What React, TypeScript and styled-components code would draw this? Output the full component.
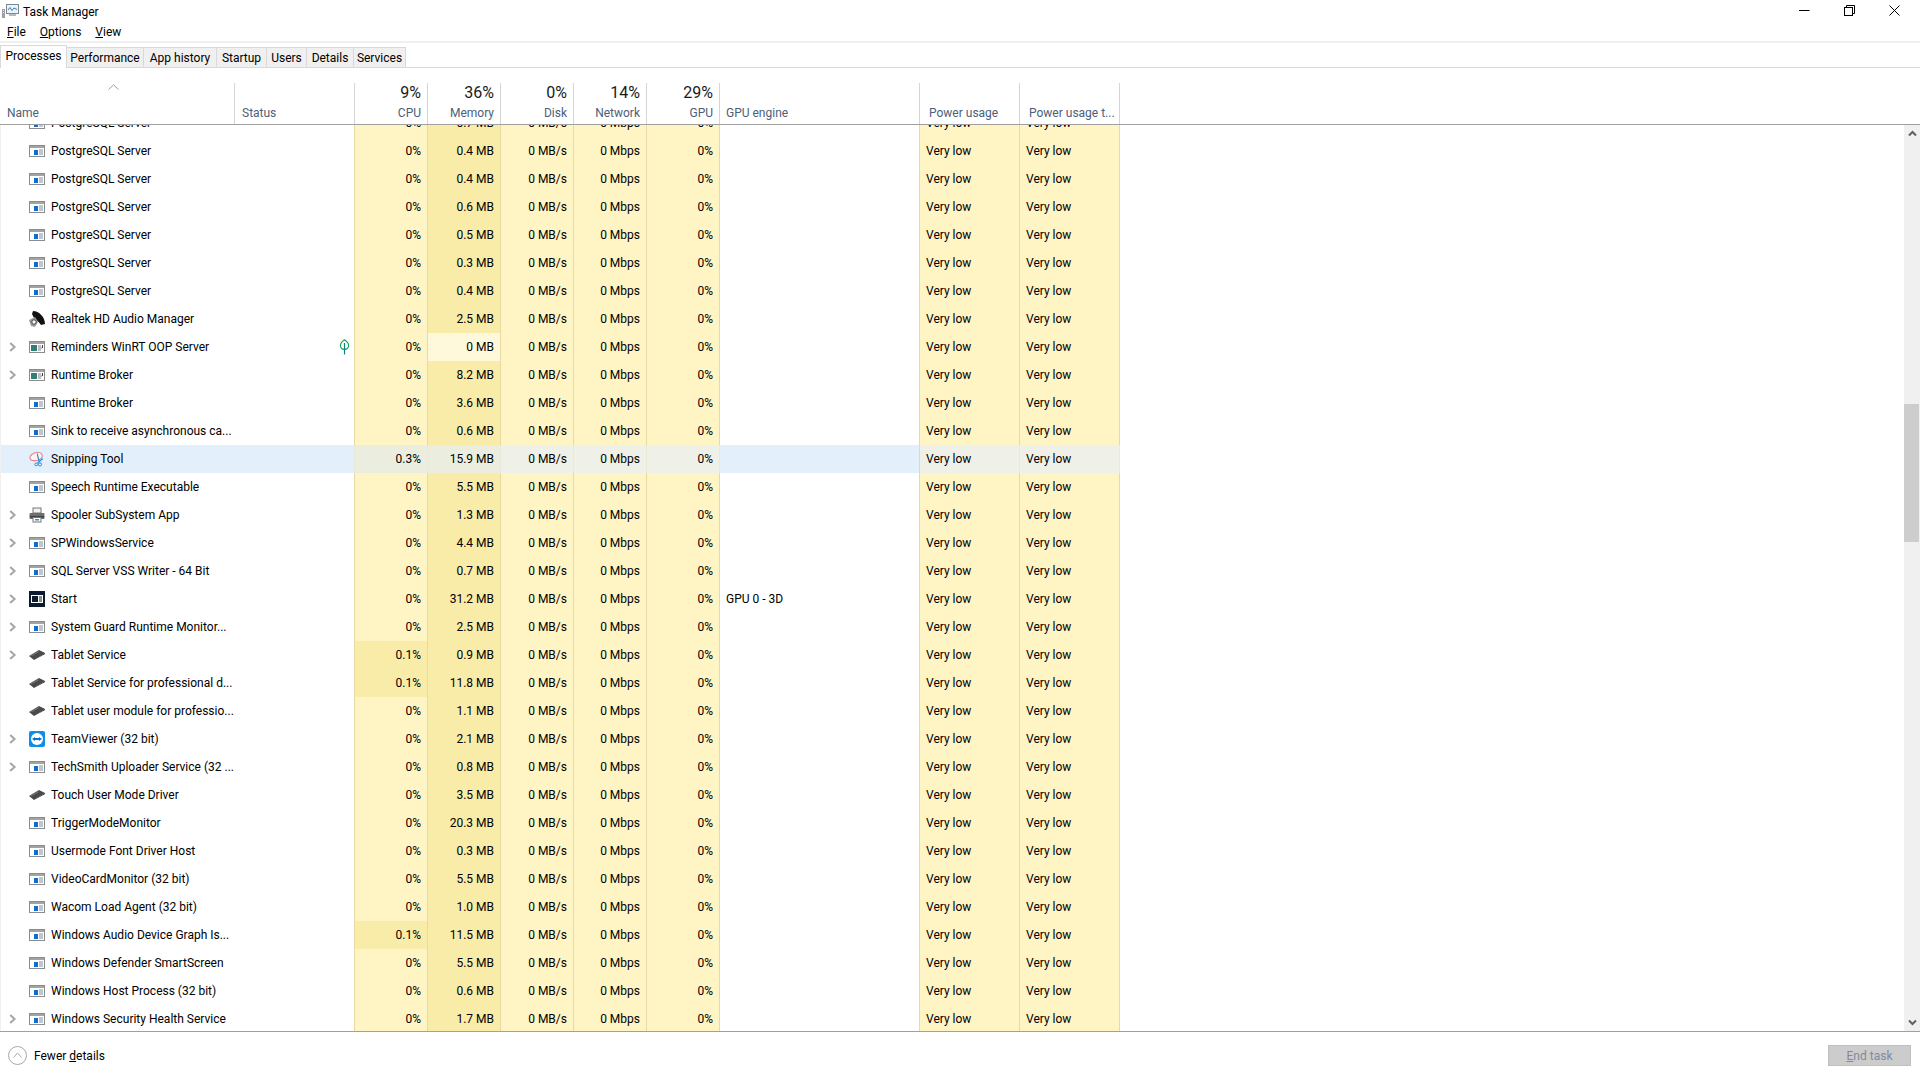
import styled, { createGlobalStyle } from "styled-components";

const COLUMNS = "235px 120px 73px 73px 73px 73px 73px 200px 100px 100px";

const COLOR = {
    CELL: "#fff4c4",
    CELL_HEAT: "#f9eca8",
    CELL_COOL: "#fff9dc",
    CELL_BORDER: "#ead9a4",
    SELECTED: "#e3f0fb",
    SELECTED_CELL: "#eff1e8",
    SELECTED_HEAT: "#ebeedf",
    SELECTED_BORDER: "#ece8d8",
    HEADER_TEXT: "#4c607a",
    DIVIDER: "#d5d5d5",
};

type IconKind = "window" | "app" | "speaker" | "snip" | "printer" | "start" | "tablet" | "teamviewer";

interface ProcessRow {
    name: string;
    memory: string;
    icon?: IconKind;
    cpu?: string;
    expandable?: boolean;
    leaf?: boolean;
    selected?: boolean;
    engine?: string;
    cool?: boolean;
}

const ROWS: ProcessRow[] = [
    { name: "PostgreSQL Server", memory: "0.7 MB" },
    { name: "PostgreSQL Server", memory: "0.4 MB" },
    { name: "PostgreSQL Server", memory: "0.4 MB" },
    { name: "PostgreSQL Server", memory: "0.6 MB" },
    { name: "PostgreSQL Server", memory: "0.5 MB" },
    { name: "PostgreSQL Server", memory: "0.3 MB" },
    { name: "PostgreSQL Server", memory: "0.4 MB" },
    { name: "Realtek HD Audio Manager", memory: "2.5 MB", icon: "speaker" },
    { name: "Reminders WinRT OOP Server", memory: "0 MB", icon: "app", expandable: true, leaf: true, cool: true },
    { name: "Runtime Broker", memory: "8.2 MB", icon: "app", expandable: true },
    { name: "Runtime Broker", memory: "3.6 MB" },
    { name: "Sink to receive asynchronous ca...", memory: "0.6 MB" },
    { name: "Snipping Tool", memory: "15.9 MB", icon: "snip", cpu: "0.3%", selected: true },
    { name: "Speech Runtime Executable", memory: "5.5 MB" },
    { name: "Spooler SubSystem App", memory: "1.3 MB", icon: "printer", expandable: true },
    { name: "SPWindowsService", memory: "4.4 MB", expandable: true },
    { name: "SQL Server VSS Writer - 64 Bit", memory: "0.7 MB", expandable: true },
    { name: "Start", memory: "31.2 MB", icon: "start", expandable: true, engine: "GPU 0 - 3D" },
    { name: "System Guard Runtime Monitor...", memory: "2.5 MB", expandable: true },
    { name: "Tablet Service", memory: "0.9 MB", icon: "tablet", cpu: "0.1%", expandable: true },
    { name: "Tablet Service for professional d...", memory: "11.8 MB", icon: "tablet", cpu: "0.1%" },
    { name: "Tablet user module for professio...", memory: "1.1 MB", icon: "tablet" },
    { name: "TeamViewer (32 bit)", memory: "2.1 MB", icon: "teamviewer", expandable: true },
    { name: "TechSmith Uploader Service (32 ...", memory: "0.8 MB", expandable: true },
    { name: "Touch User Mode Driver", memory: "3.5 MB", icon: "tablet" },
    { name: "TriggerModeMonitor", memory: "20.3 MB" },
    { name: "Usermode Font Driver Host", memory: "0.3 MB" },
    { name: "VideoCardMonitor (32 bit)", memory: "5.5 MB" },
    { name: "Wacom Load Agent (32 bit)", memory: "1.0 MB" },
    { name: "Windows Audio Device Graph Is...", memory: "11.5 MB", cpu: "0.1%" },
    { name: "Windows Defender SmartScreen", memory: "5.5 MB" },
    { name: "Windows Host Process (32 bit)", memory: "0.6 MB" },
    { name: "Windows Security Health Service", memory: "1.7 MB", expandable: true },
];

const GlobalStyle = createGlobalStyle`
    html, body {
        margin: 0;
        height: 100%;
        background: #fff;
    }
    body {
        font-family: Roboto, "Noto Sans", sans-serif;
        font-size: 12px;
        color: #000;
    }
`;

const Page = styled.div`
    display: flex;
    flex-direction: column;
    height: 100vh;
    overflow: hidden;
`;

const TitleBar = styled.div`
    display: flex;
    align-items: center;
    height: 22px;
    padding: 0 3px 0 2px;
    box-sizing: border-box;
`;

const TitleText = styled.span`
    margin-left: 4px;
    padding-top: 2px;
    flex: 1;
`;

const WindowButton = styled.div`
    display: flex;
    align-items: center;
    justify-content: center;
    align-self: flex-start;
    width: 45px;
    height: 20px;
`;

const MenuBar = styled.div`
    display: flex;
    align-items: center;
    gap: 14px;
    height: 19px;
    padding: 1px 0 0 7px;
    box-sizing: border-box;
    height: 21px;
    border-bottom: 2px solid #f0f0f0;
`;

const TabStrip = styled.div`
    display: flex;
    align-items: flex-end;
    height: 25px;
    border-bottom: 1px solid #d9d9d9;
    box-sizing: border-box;
`;

const Tab = styled.div<{ $active?: boolean; $width: number }>`
    display: flex;
    align-items: center;
    justify-content: center;
    box-sizing: border-box;
    width: ${({ $width }) => $width}px;
    height: ${({ $active }) => ($active ? "23px" : "21px")};
    margin-bottom: -1px;
    background: ${({ $active }) => ($active ? "#fff" : "#f0f0f0")};
    border: 1px solid #d9d9d9;
    border-left-width: ${({ $active }) => ($active ? "1px" : "0")};
    border-bottom-width: ${({ $active }) => ($active ? "0" : "1px")};
    padding-bottom: ${({ $active }) => ($active ? "2px" : "0")};
`;

const HeaderRow = styled.div`
    position: relative;
    display: grid;
    grid-template-columns: ${COLUMNS};
    height: 57px;
    align-items: end;
    border-bottom: 1px solid #a0a0a0;
    box-sizing: border-box;
    padding-right: 16px;
`;

const HeaderCell = styled.div<{ $align?: "left" | "right"; $inset?: number }>`
    display: flex;
    flex-direction: column;
    justify-content: flex-end;
    box-sizing: border-box;
    height: 41px;
    padding: 0 6px 2px ${({ $inset }) => $inset ?? 6}px;
    text-align: ${({ $align }) => $align ?? "left"};
    white-space: nowrap;
    border-right: 1px solid ${COLOR.DIVIDER};
`;

const SortCaret = styled.svg`
    position: absolute;
    left: 108px;
    top: 16px;
`;

const Percent = styled.div`
    margin-bottom: 1px;
    font-size: 16px;
    line-height: 20px;
    color: #1a1a1a;
`;

const ColumnLabel = styled.div`
    line-height: 18px;
    color: ${COLOR.HEADER_TEXT};
`;

const Body = styled.div`
    flex: 1;
    display: flex;
    min-height: 0;
    border-bottom: 1px solid #a0a0a0;
`;

const RowList = styled.div`
    flex: 1;
    min-width: 0;
    overflow: hidden;
    border-left: 1px solid #f0f0f0;
`;

const RowScroller = styled.div`
    margin-top: -16px;
    margin-left: -1px;
`;

const Row = styled.div<{ $selected?: boolean }>`
    display: grid;
    grid-template-columns: ${COLUMNS};
    width: 1120px;
    height: 28px;
    line-height: 28px;
    background: ${({ $selected }) => ($selected ? COLOR.SELECTED : "transparent")};
    white-space: nowrap;
`;

const NameCell = styled.div`
    display: flex;
    align-items: center;
    padding-left: 9px;
`;

const ChevronSlot = styled.div`
    display: flex;
    align-items: center;
    width: 20px;
    flex-shrink: 0;
`;

const IconSlot = styled.div`
    display: flex;
    align-items: center;
    width: 22px;
    flex-shrink: 0;
`;

const StatusCell = styled.div<{ $selected?: boolean }>`
    display: flex;
    align-items: center;
    justify-content: flex-end;
    padding-right: 4px;
    border-right: 1px solid ${({ $selected }) => ($selected ? COLOR.SELECTED_BORDER : COLOR.CELL_BORDER)};
`;

const ValueCell = styled.div<{ $selected?: boolean; $heat?: boolean; $cool?: boolean; $left?: boolean }>`
    box-sizing: border-box;
    padding: 0 6px;
    text-align: ${({ $left }) => ($left ? "left" : "right")};
    background: ${({ $selected, $heat, $cool }) => {
        if ($selected) {
            return $heat ? COLOR.SELECTED_HEAT : COLOR.SELECTED_CELL;
        }
        if ($cool) {
            return COLOR.CELL_COOL;
        }
        return $heat ? COLOR.CELL_HEAT : COLOR.CELL;
    }};
    border-right: 1px solid ${({ $selected }) => ($selected ? COLOR.SELECTED_BORDER : COLOR.CELL_BORDER)};
`;

const EngineCell = styled.div`
    padding-left: 6px;
    border-right: 1px solid ${COLOR.CELL_BORDER};
`;

const Scrollbar = styled.div`
    display: flex;
    flex-direction: column;
    width: 16px;
    flex-shrink: 0;
    background: #f0f0f0;
`;

const ScrollArrow = styled.div`
    display: flex;
    align-items: center;
    justify-content: center;
    height: 17px;
    flex-shrink: 0;
`;

const ScrollThumb = styled.div`
    width: 15px;
    height: 138px;
    margin-top: 262px;
    margin-bottom: auto;
    background: #cdcdcd;
`;

const Footer = styled.div`
    display: flex;
    align-items: center;
    height: 46px;
    flex-shrink: 0;
    padding: 0 9px 0 8px;
    box-sizing: border-box;
`;

const FewerDetails = styled.span`
    margin-left: 7px;
    padding-top: 1px;
    flex: 1;
`;

const EndTaskButton = styled.div`
    display: flex;
    align-items: center;
    justify-content: center;
    width: 83px;
    height: 21px;
    padding-top: 1px;
    box-sizing: border-box;
    background: #cccccc;
    border: 1px solid #bfbfbf;
    color: #7f8aa0;
`;

const Chevron = () => (
    <svg width="8" height="12" viewBox="0 0 8 12">
        <path d="M1.2 2 L5.6 6 L1.2 10" fill="none" stroke="#a6a6a6" strokeWidth="2" />
    </svg>
);

const LeafIcon = () => (
    <svg width="11" height="16" viewBox="0 0 11 16">
        <path d="M5.5 .8 C8.6 3 10 5 9.6 7.2 C9.2 9.2 7.5 10.4 5.5 10.4 C3.5 10.4 1.8 9.2 1.4 7.2 C1 5 2.4 3 5.5 .8 Z" fill="none" stroke="#17a34f" strokeWidth="1.1" />
        <path d="M5.5 4 V15.5" stroke="#0d7f8c" strokeWidth="1.2" />
    </svg>
);

const ProcessIcon = ({ kind }: { kind: IconKind }) => {
    switch (kind) {
        case "app":
            return (
                <svg width="16" height="12" viewBox="0 0 16 12">
                    <rect x=".5" y=".5" width="15" height="11" fill="#fff" stroke="#8c8c8c" />
                    <rect x="1" y="1" width="14" height="2" fill="#a3a3a3" />
                    <rect x="2" y="4" width="6" height="6" fill="#2f7f78" />
                    <path d="M9 5h3M9 7h4M9 9h3" stroke="#7a7a7a" />
                    <path d="M13.5 4v3" stroke="#444" />
                </svg>
            );
        case "speaker":
            return (
                <svg width="16" height="16" viewBox="0 0 16 16">
                    <path d="M4 0 C10 0 16 6 16 13 L12 14 C10 11 8 9 5 7 L3 3 Z" fill="#111" />
                    <path d="M0 9 L6 6 L9 11 L6 16 L2 15 Z" fill="#9a9a9a" />
                    <circle cx="5" cy="11" r="2.2" fill="#fff" stroke="#444" />
                </svg>
            );
        case "snip":
            return (
                <svg width="16" height="16" viewBox="0 0 16 16">
                    <path d="M1 7.5 C.4 5 4 1.5 8 1.2 C12 1 14 3.5 13 6 C12 8.5 8 10 4.5 9.6 C2.5 9.4 1.3 8.6 1 7.5 Z" fill="#fff5f5" stroke="#e8848e" strokeWidth="1.1" />
                    <path d="M8.2 2.5 L10.2 11 M13.8 7.5 L8.6 12" stroke="#2d8fd6" strokeWidth="1.2" />
                    <circle cx="11" cy="13.4" r="1.6" fill="none" stroke="#2d8fd6" />
                    <circle cx="7.2" cy="13.4" r="1.4" fill="none" stroke="#2d8fd6" />
                </svg>
            );
        case "printer":
            return (
                <svg width="16" height="16" viewBox="0 0 16 16">
                    <rect x="4" y="1" width="8" height="5" fill="#f2f2f2" stroke="#777" />
                    <rect x=".5" y="6" width="15" height="6" rx="1" fill="#6e6e6e" />
                    <rect x="1" y="9" width="14" height="1.5" fill="#404040" />
                    <rect x="4" y="10.5" width="8" height="4.5" fill="#fff" stroke="#777" />
                    <rect x="6" y="12" width="4" height="1.5" fill="#3a8fc8" />
                </svg>
            );
        case "start":
            return (
                <svg width="16" height="16" viewBox="0 0 16 16">
                    <rect width="16" height="16" fill="#0b1a2c" />
                    <rect x="2" y="4" width="12" height="8" fill="#fff" />
                    <rect x="3" y="5" width="6" height="6" fill="#0b1a2c" />
                    <path d="M10 6h3M10 8h3M10 10h3" stroke="#0b1a2c" />
                </svg>
            );
        case "tablet":
            return (
                <svg width="16" height="10" viewBox="0 0 16 10">
                    <path d="M0 6 L10 0 L16 3 L5 10 Z" fill="#4a4a4a" />
                    <path d="M0 6 L5 10 L16 3 L16 4 L5 10 Z" fill="#1d1d1d" />
                    <path d="M2 6 L10 1.5" stroke="#777" />
                </svg>
            );
        case "teamviewer":
            return (
                <svg width="16" height="16" viewBox="0 0 16 16">
                    <rect width="16" height="16" rx="2" fill="#0e8ee9" />
                    <circle cx="8" cy="8" r="6" fill="#fff" />
                    <path d="M3 8 L6 6 V7 H10 V6 L13 8 L10 10 V9 H6 V10 Z" fill="#0e6fc9" />
                </svg>
            );
        default:
            return (
                <svg width="16" height="12" viewBox="0 0 16 12">
                    <rect x=".5" y=".5" width="15" height="11" fill="#fff" stroke="#8c8c8c" />
                    <rect x="1" y="1" width="14" height="2" fill="#a3a3a3" />
                    <rect x="5" y="5" width="4" height="5" fill="#0f6cd0" />
                    <path d="M10 5h4M10 7h4M10 9h4" stroke="#7a8fa8" />
                </svg>
            );
    }
};

const TaskManagerIcon = () => (
    <svg width="17" height="14" viewBox="0 0 17 14">
        <rect x="4.5" y=".5" width="12" height="9" fill="#eaf3fa" stroke="#7d8a96" />
        <path d="M6 6 L8 3.5 L10 6.5 L12 4 L15 5.5" fill="none" stroke="#2f7fc0" />
        <rect x="7" y="10" width="7" height="2" fill="#b6bcc2" />
        <rect x="0" y="5" width="3" height="9" fill="#9aa0a6" />
        <path d="M1 6.5h1M1 8.5h1" stroke="#eee" />
    </svg>
);

const HEADER_COLUMNS = [
    { percent: "9%", label: "CPU" },
    { percent: "36%", label: "Memory" },
    { percent: "0%", label: "Disk" },
    { percent: "14%", label: "Network" },
    { percent: "29%", label: "GPU" },
];

const TABS = [
    { label: "Processes", width: 67 },
    { label: "Performance", width: 77 },
    { label: "App history", width: 73 },
    { label: "Startup", width: 50 },
    { label: "Users", width: 40 },
    { label: "Details", width: 47 },
    { label: "Services", width: 52 },
];

const App = () => {
    return (
        <Page>
            <GlobalStyle />
            <TitleBar>
                <TaskManagerIcon />
                <TitleText>Task Manager</TitleText>
                <WindowButton>
                    <svg width="11" height="11" viewBox="0 0 11 11">
                        <path d="M0 5.5 H10.5" stroke="#000" />
                    </svg>
                </WindowButton>
                <WindowButton>
                    <svg width="11" height="11" viewBox="0 0 11 11">
                        <path d="M2.5 2.5 V.5 H10.5 V8.5 H8.5" fill="none" stroke="#000" />
                        <rect x=".5" y="2.5" width="8" height="8" fill="#fff" stroke="#000" />
                    </svg>
                </WindowButton>
                <WindowButton>
                    <svg width="11" height="11" viewBox="0 0 11 11">
                        <path d="M.5 .5 L10.5 10.5 M10.5 .5 L.5 10.5" stroke="#000" />
                    </svg>
                </WindowButton>
            </TitleBar>
            <MenuBar>
                <span>
                    <u>F</u>ile
                </span>
                <span>
                    <u>O</u>ptions
                </span>
                <span>
                    <u>V</u>iew
                </span>
            </MenuBar>
            <TabStrip>
                {TABS.map((tab, index) => (
                    <Tab key={tab.label} $active={index === 0} $width={tab.width}>
                        {tab.label}
                    </Tab>
                ))}
            </TabStrip>
            <HeaderRow>
                <HeaderCell $inset={7}>
                    <ColumnLabel>Name</ColumnLabel>
                </HeaderCell>
                <HeaderCell $inset={7}>
                    <ColumnLabel>Status</ColumnLabel>
                </HeaderCell>
                {HEADER_COLUMNS.map((column) => (
                    <HeaderCell key={column.label} $align="right">
                        <Percent>{column.percent}</Percent>
                        <ColumnLabel>{column.label}</ColumnLabel>
                    </HeaderCell>
                ))}
                <HeaderCell>
                    <ColumnLabel>GPU engine</ColumnLabel>
                </HeaderCell>
                <HeaderCell $inset={9}>
                    <ColumnLabel>Power usage</ColumnLabel>
                </HeaderCell>
                <HeaderCell $inset={9}>
                    <ColumnLabel>Power usage t...</ColumnLabel>
                </HeaderCell>
                <SortCaret width="11" height="6" viewBox="0 0 11 6">
                    <path d="M.5 5.5 L5.5 .8 L10.5 5.5" fill="none" stroke="#a0a0a0" />
                </SortCaret>
            </HeaderRow>
            <Body>
                <RowList>
                    <RowScroller>
                        {ROWS.map((row, index) => (
                            <Row key={index} $selected={row.selected}>
                                <NameCell>
                                    <ChevronSlot>{row.expandable && <Chevron />}</ChevronSlot>
                                    <IconSlot>
                                        <ProcessIcon kind={row.icon ?? "window"} />
                                    </IconSlot>
                                    {row.name}
                                </NameCell>
                                <StatusCell $selected={row.selected}>{row.leaf && <LeafIcon />}</StatusCell>
                                <ValueCell $selected={row.selected} $heat={Boolean(row.cpu)}>
                                    {row.cpu ?? "0%"}
                                </ValueCell>
                                <ValueCell $selected={row.selected} $heat={!row.cool} $cool={row.cool}>
                                    {row.memory}
                                </ValueCell>
                                <ValueCell $selected={row.selected}>0 MB/s</ValueCell>
                                <ValueCell $selected={row.selected}>0 Mbps</ValueCell>
                                <ValueCell $selected={row.selected}>0%</ValueCell>
                                <EngineCell>{row.engine}</EngineCell>
                                <ValueCell $selected={row.selected} $left>
                                    Very low
                                </ValueCell>
                                <ValueCell $selected={row.selected} $left>
                                    Very low
                                </ValueCell>
                            </Row>
                        ))}
                    </RowScroller>
                </RowList>
                <Scrollbar>
                    <ScrollArrow>
                        <svg width="9" height="7" viewBox="0 0 9 7">
                            <path d="M1 5.5 L4.5 2 L8 5.5" fill="none" stroke="#606060" strokeWidth="2" />
                        </svg>
                    </ScrollArrow>
                    <ScrollThumb />
                    <ScrollArrow>
                        <svg width="9" height="7" viewBox="0 0 9 7">
                            <path d="M1 1.5 L4.5 5 L8 1.5" fill="none" stroke="#606060" strokeWidth="2" />
                        </svg>
                    </ScrollArrow>
                </Scrollbar>
            </Body>
            <Footer>
                <svg width="19" height="19" viewBox="0 0 19 19">
                    <circle cx="9.5" cy="9.5" r="9" fill="none" stroke="#a8a8a8" />
                    <path d="M5.5 11.5 L9.5 7 L13.5 11.5" fill="none" stroke="#a8a8a8" />
                </svg>
                <FewerDetails>
                    Fewer <u>d</u>etails
                </FewerDetails>
                <EndTaskButton>
                    <span>
                        <u>E</u>nd task
                    </span>
                </EndTaskButton>
            </Footer>
        </Page>
    );
};

export default App;
